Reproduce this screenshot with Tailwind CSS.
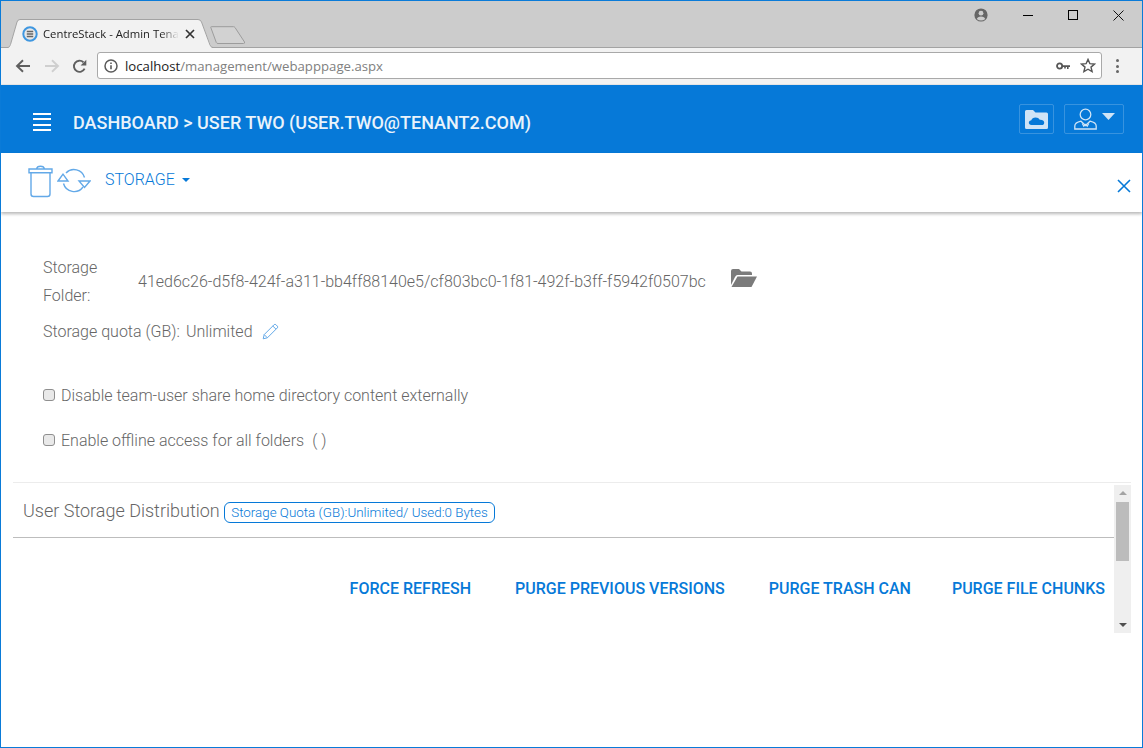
<!DOCTYPE html>
<html>
<head>
<meta charset="utf-8">
<script src="https://cdn.jsdelivr.net/npm/@tailwindcss/browser@4"></script>
</head>
<body class="bg-white overflow-hidden font-['Roboto',sans-serif]">
<div class="w-[1143px] h-[748px] border border-[#0a7bd8] flex flex-col overflow-hidden bg-white">
  <!-- tab strip -->
  <div class="h-[47px] shrink-0 bg-[#cccccc] relative flex items-end">
    <div class="absolute left-0 right-0 bottom-0 h-px bg-[#a3a3a3]"></div>
    <div class="relative w-[206px] h-[29px] ml-[6px] flex items-center shrink-0">
      <svg class="absolute left-0 top-0" width="206" height="29" viewBox="0 0 206 29"><path d="M1 29 L3.5 25 L10 3 Q10.8 .5 13 .5 L191 .5 Q193.5 .5 194.5 3 L203 25 L205 29Z" fill="#f2f2f2"/><path d="M0 28.5 L1 28.5 Q2.5 28.5 3.5 25.5 L10 3 Q10.8 .5 13 .5 L191 .5 Q193.5 .5 194.5 3 L203 26 Q204 28.5 206 28.5" fill="none" stroke="#a3a3a3"/></svg>
      <svg class="relative ml-[15px] shrink-0" width="16" height="16" viewBox="0 0 16 16"><circle cx="8" cy="8" r="6.7" fill="#e8e8e8" stroke="#3f97e0" stroke-width="2"/><path d="M4.8 5.4h6.4M4.8 8h6.4M4.8 10.6h6.4" stroke="#666" stroke-width="1.5"/></svg>
      <span class="relative ml-[5px] w-[136px] overflow-hidden whitespace-nowrap text-[11.3px] leading-[16px] text-[#222] font-['Open_Sans','Noto_Sans',sans-serif] [mask-image:linear-gradient(to_right,black_118px,transparent_136px)]">CentreStack - Admin Tenant</span>
      <svg class="relative ml-[6px] shrink-0" width="10" height="10" viewBox="0 0 10 10"><path d="M1 1l8 8M9 1l-8 8" stroke="#333" stroke-width="1.7"/></svg>
    </div>
    <svg class="absolute left-[209px] top-[25px]" width="36" height="19" viewBox="0 0 36 19"><path d="M0.8 1.5 Q0.5 0.7 1.5 0.7 L23.5 0.7 Q24.5 0.7 25 1.5 L34.5 16 Q35 17.5 33.5 17.5 L8 17.5 Q6.8 17.5 6.3 16.5 Z" fill="#d2d2d2" stroke="#9c9c9c"/></svg>
    <svg class="absolute left-[973px] top-[7px]" width="14" height="14" viewBox="0 0 14 14"><circle cx="7" cy="7" r="6.6" fill="#666"/><circle cx="7" cy="5.2" r="2.4" fill="#ccc"/><path d="M2.8 11 Q3.5 8.4 7 8.4 Q10.5 8.4 11.2 11 Q9.5 12.6 7 12.6 Q4.5 12.6 2.8 11Z" fill="#ccc"/></svg>
    <div class="absolute left-[1022px] top-[14px] w-[10px] h-px bg-black"></div>
    <div class="absolute left-[1067px] top-[9px] w-[10px] h-[10px] border border-black"></div>
    <svg class="absolute left-[1112px] top-[9px]" width="11" height="11" viewBox="0 0 11 11"><path d="M0.5 0.5l10 10M10.5 0.5l-10 10" stroke="#111" stroke-width="1"/></svg>
  </div>
  <!-- address toolbar -->
  <div class="h-[37px] shrink-0 bg-[#f2f2f2] flex items-center border-b border-[#e4e4e4] relative">
    <svg class="ml-[14px] shrink-0" width="16" height="14" viewBox="0 0 16 14"><path d="M15 7H2.5M8 1.2L2 7l6 5.8" fill="none" stroke="#5f5f5f" stroke-width="1.9"/></svg>
    <svg class="ml-[13px] shrink-0" width="16" height="14" viewBox="0 0 16 14"><path d="M1 7h12.5M8 1.2L14 7l-6 5.8" fill="none" stroke="#cfcfcf" stroke-width="1.9"/></svg>
    <svg class="ml-[12px] shrink-0" width="15" height="15" viewBox="0 0 15 15"><path d="M12.6 9.7A5.6 5.6 0 1 1 11.4 3.2" fill="none" stroke="#5f5f5f" stroke-width="1.9"/><path d="M14.3 0.8V6.6H8.6Z" fill="#5f5f5f"/></svg>
    <div class="ml-[10px] mb-px w-[1005px] h-[27px] bg-white border border-[#a9a9a9] rounded-[3px] flex items-center shrink-0">
      <svg class="ml-[6px] shrink-0" width="14" height="14" viewBox="0 0 14 14"><circle cx="7" cy="7" r="6" fill="none" stroke="#5a5a5a" stroke-width="1.5"/><path d="M7 6.2v4M7 3.4v1.6" stroke="#5a5a5a" stroke-width="1.6"/></svg>
      <span class="ml-[7px] text-[13.2px] leading-[18px] text-[#222] font-['Open_Sans','Noto_Sans',sans-serif] whitespace-nowrap">localhost<span class="text-[#808080]">/management/webapppage.aspx</span></span>
      <svg class="ml-auto shrink-0" width="14" height="8" viewBox="0 0 14 8"><circle cx="3.6" cy="4" r="2.6" fill="none" stroke="#555" stroke-width="1.8"/><path d="M6 3.2h8v1.8h-1.4v2h-1.6v-2h-1.2v1.4H8.2V5H6Z" fill="#555"/></svg>
      <svg class="ml-[10px] mr-[5px] shrink-0" width="16" height="15" viewBox="0 0 16 15"><path d="M8 1.4l1.9 4.3 4.6.4-3.5 3 1.1 4.5L8 11.2l-4.1 2.4L5 9.1l-3.5-3 4.6-.4Z" fill="none" stroke="#555" stroke-width="1.4"/></svg>
    </div>
    <div class="ml-[14px] flex flex-col gap-[2.5px]">
      <span class="w-[3px] h-[3px] rounded-full bg-[#666]"></span><span class="w-[3px] h-[3px] rounded-full bg-[#666]"></span><span class="w-[3px] h-[3px] rounded-full bg-[#666]"></span>
    </div>
  </div>
  <!-- blue header -->
  <div class="h-[68px] shrink-0 bg-[#0679d8] flex items-center">
    <div class="ml-[32px] mt-[6px] w-[18px] flex flex-col gap-[3.2px]">
      <span class="h-[2px] bg-white"></span><span class="h-[2px] bg-white"></span><span class="h-[2px] bg-white"></span><span class="h-[2px] bg-white"></span>
    </div>
    <div class="ml-[22px] mt-[6px] text-[18px] font-medium text-[#e9f3fb] whitespace-nowrap">DASHBOARD &gt; USER TWO (USER.TWO@TENANT2.COM)</div>
    <div class="ml-auto w-[35px] h-[30px] border border-white/20 rounded-[2px] flex items-center justify-center">
      <svg width="23" height="19" viewBox="0 0 23 19"><path d="M0 1.5Q0 0 1.5 0H8l2.5 2.5H21.5Q23 2.5 23 4V17.5Q23 19 21.5 19H1.5Q0 19 0 17.5Z" fill="#cfe4f6"/><path d="M6.5 15Q3.8 15 3.8 12.6 Q3.8 10.4 6.3 10.3 Q7 7.4 10.6 7.4 Q13.6 7.4 14.8 9.8 Q18.8 9.6 19.2 12.4 Q19.2 15 16.6 15Z" fill="#0679d8"/></svg>
    </div>
    <div class="ml-[10px] mr-[18px] w-[60px] h-[30px] border border-white/20 rounded-[2px] flex items-center">
      <svg class="ml-[9px]" width="23" height="22" viewBox="0 0 23 22"><circle cx="11.5" cy="6.5" r="5.3" fill="none" stroke="#cfe4f6" stroke-width="1.3"/><path d="M0.8 21V18Q0.8 14.6 7 13.2L11.5 17.5L16 13.2Q22.2 14.6 22.2 18V21Z" fill="none" stroke="#cfe4f6" stroke-width="1.3"/><path d="M8.2 15.4l1.6 3 1.7-2 1.7 2 1.6-3" fill="none" stroke="#cfe4f6" stroke-width="1.1"/></svg>
      <svg class="ml-[5px] mb-[5px]" width="13" height="7" viewBox="0 0 13 7"><path d="M0 0H13L6.5 7Z" fill="#cfe4f6"/></svg>
    </div>
  </div>
  <!-- storage toolbar -->
  <div class="h-[59px] shrink-0 bg-white shadow-[0_2px_3px_rgba(0,0,0,0.28)] relative z-10 flex items-start">
    <svg class="ml-[27px] mt-[12px] shrink-0" width="25" height="33" viewBox="0 0 25 33"><path d="M1 7.8V4H24V7.8ZM8.5 4Q9 1.2 12.5 1.2T16.5 4" fill="none" stroke="#63a9e8" stroke-width="1.4"/><path d="M3 8V29Q3 31.5 5.5 31.5H19.5Q22 31.5 22 29V8" fill="none" stroke="#63a9e8" stroke-width="1.4"/></svg>
    <svg class="ml-[4px] mt-[15px] shrink-0" width="34" height="25" viewBox="0 0 34 25"><path d="M9 5A11 11 0 0 1 27.5 9.5M6.5 15.5A11 11 0 0 0 26 19" fill="none" stroke="#63a9e8" stroke-width="1.4"/><path d="M1 13L6 6.2L11 13ZM22 13H33L27.5 19.5Z" fill="none" stroke="#63a9e8" stroke-width="1.4"/></svg>
    <div class="ml-[14px] mt-[18px] text-[16px] leading-[18px] font-light text-[#0679d8] whitespace-nowrap">STORAGE</div>
    <svg class="ml-[7px] mt-[25px]" width="8" height="4" viewBox="0 0 8 4"><path d="M0 0H8L4 4Z" fill="#0679d8"/></svg>
    <svg class="absolute right-[11px] top-[26px]" width="14" height="14" viewBox="0 0 14 14"><path d="M1 1l12 12M13 1L1 13" stroke="#0679d8" stroke-width="1.6"/></svg>
  </div>
  <!-- content -->
  <div class="flex-1 pl-[42px] pt-[42px] text-[16px] font-light text-[#666666]">
    <div class="flex items-start h-[56px]">
      <div class="w-[95px] leading-[28px]">Storage<br>Folder:</div>
      <div class="mt-[14px] leading-[28px] whitespace-nowrap">41ed6c26-d5f8-424f-a311-bb4ff88140e5/cf803bc0-1f81-492f-b3ff-f5942f0507bc</div>
      <svg class="ml-[25px] mt-[14px] shrink-0" width="26" height="20" viewBox="0 0 26 20"><path d="M0 17V3Q0 1 2 1H8L10.5 3.5H19Q21 3.5 21 5.5V7H6.5Q5 7 4 9Z" fill="#7b7b7b"/><path d="M6.5 8.5H26L20.5 19H0.5Z" fill="#7b7b7b"/></svg>
    </div>
    <div class="flex items-center h-[28px] mt-[8px]">
      <span>Storage quota (GB):</span><span class="ml-[6px]">Unlimited</span>
      <svg class="ml-[9px] mb-[2px]" width="17" height="17" viewBox="0 0 17 17"><path d="M1.2 15.8L2.2 11.6 12.2 1.6Q13 .9 13.8 1.6L15.4 3.2Q16.1 4 15.4 4.8L5.4 14.8ZM2.2 11.6L5.4 14.8M10.8 3L14 6.2" fill="none" stroke="#63a9e8" stroke-width="1"/></svg>
    </div>
    <label class="flex items-center h-[24px] mt-[38px]">
      <span class="w-[12px] h-[12px] border border-[#8f8f8f] rounded-[3px] bg-[#e9e9e9] mb-[3px]"></span>
      <span class="ml-[6px]">Disable team-user share home directory content externally</span>
    </label>
    <label class="flex items-center h-[24px] mt-[21px]">
      <span class="w-[12px] h-[12px] border border-[#8f8f8f] rounded-[3px] bg-[#e9e9e9] mb-[3px]"></span>
      <span class="ml-[6px]">Enable offline access for all folders</span><span class="ml-[8px]">( )</span>
    </label>
    <div class="-ml-[30px] mt-[29px] w-[1118px] flex flex-col">
      <div class="h-px bg-[#ececec] w-[1118px]"></div>
      <div class="flex">
        <div class="w-[1101px] h-[145px] shrink-0">
          <div class="h-[55px] flex items-center pl-[10px] border-b border-[#bdbdbd]">
            <span class="text-[18px] font-light text-[#666]">User Storage Distribution</span>
            <span class="ml-[4px] mt-[5px] h-[21px] px-[6.5px] border border-[#0679d8] rounded-[6px] text-[13.4px] leading-[19px] text-[#0679d8] font-light whitespace-nowrap">Storage Quota (GB):Unlimited/ Used:0 Bytes</span>
          </div>
          <div class="h-[90px] flex justify-end items-start pt-[42px] pr-[9px] text-[16px] font-medium leading-[18px] text-[#0679d8] whitespace-nowrap">
            <span>FORCE REFRESH</span><span class="ml-[44px]">PURGE PREVIOUS VERSIONS</span><span class="ml-[44px]">PURGE TRASH CAN</span><span class="ml-[41px]">PURGE FILE CHUNKS</span>
          </div>
        </div>
        <div class="mt-[2px] w-[17px] h-[148px] shrink-0 bg-[#efefef] flex flex-col items-center">
          <svg class="mt-[6px]" width="8" height="4" viewBox="0 0 8 4"><path d="M4 0L8 4H0Z" fill="#a3a3a3"/></svg>
          <div class="mt-[7px] w-[13px] h-[59px] bg-[#bcbcbc]"></div>
          <svg class="mt-auto mb-[6px]" width="8" height="4" viewBox="0 0 8 4"><path d="M0 0H8L4 4Z" fill="#505050"/></svg>
        </div>
      </div>
    </div>
  </div>
</div>
</body>
</html>
